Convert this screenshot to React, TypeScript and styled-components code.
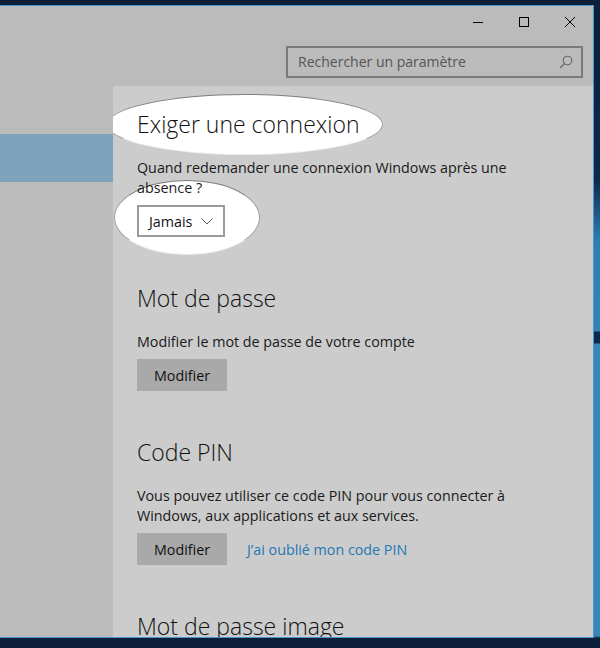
import React from "react";
import styled, { createGlobalStyle } from "styled-components";

const GlobalStyle = createGlobalStyle`
  html, body { margin: 0; padding: 0; background: #0b1f38; }
  body { font-family: "Open Sans", "Noto Sans", sans-serif; }
  * { box-sizing: border-box; }
`;

const Screen = styled.div`
  width: 600px;
  height: 648px;
  display: flex;
  overflow: hidden;
  background: #0b1f38;
`;

const WindowColumn = styled.div`
  width: 594px;
  padding-top: 5px;
  padding-bottom: 10px;
  display: flex;
`;

const DesktopStrip = styled.div`
  flex: 1;
  background: linear-gradient(
    to bottom,
    #0b1f38 0px,
    #0d2a4a 180px,
    #2f7db2 240px,
    #3583b6 331px,
    #0b2a4c 332px,
    #0b2a4c 343px,
    #3a86b8 344px,
    #3a86b8 636px,
    #0b1f38 638px
  );
`;

const Window = styled.div`
  flex: 1;
  display: flex;
  flex-direction: column;
  border: 1px solid #4a97cf;
  border-left: none;
  background: #bbbbbb;
  overflow: hidden;
`;

const TitleBar = styled.div`
  height: 32px;
  display: flex;
  justify-content: flex-end;
`;

const CaptionButton = styled.div`
  width: 46px;
  height: 32px;
  display: flex;
  align-items: center;
  justify-content: center;
  color: #000;
`;

const SearchRow = styled.div`
  height: 48px;
  display: flex;
  justify-content: flex-end;
  align-items: flex-start;
  padding: 8px 10px 0 0;
`;

const SearchBox = styled.div`
  width: 297px;
  height: 32px;
  border: 2px solid #7a7a7a;
  display: flex;
  align-items: center;
  justify-content: space-between;
  padding: 0 8px 1px 10px;
  font-size: 14px;
  color: #555;
`;

const Body = styled.div`
  flex: 1;
  display: flex;
  min-height: 0;
`;

const Nav = styled.div`
  width: 113px;
  padding-top: 48px;
  background: #bbbbbb;
`;

const NavItem = styled.div<{ $selected?: boolean }>`
  height: 48px;
  background: ${(p) => (p.$selected ? "#7fa3bb" : "transparent")};
`;

const Content = styled.div`
  flex: 1;
  background: #cccccc;
  padding: 22px 0 0 24px;
  overflow: hidden;
`;

const Section = styled.section`
  position: relative;
  width: 380px;
  margin-bottom: 45px;
`;

const Highlight = styled.div<{ $w: number; $h: number; $x: number; $y: number }>`
  position: absolute;
  left: ${(p) => p.$x}px;
  top: ${(p) => p.$y}px;
  width: ${(p) => p.$w}px;
  height: ${(p) => p.$h}px;
  border-radius: 50%;
  background: radial-gradient(ellipse at center, #ffffff 0%, #ffffff 82%, #f2f2f2 100%);
  border: 1.5px solid #7f7f7f;
  border-bottom-color: rgba(200, 200, 200, 0.3);
  border-left-color: #a0a0a0;
  border-right-color: #a0a0a0;
  z-index: 0;
`;

const Heading = styled.h2`
  position: relative;
  z-index: 1;
  margin: 0 0 18px 0;
  font-family: "Open Sans", "Noto Sans", sans-serif;
  font-weight: 300;
  font-size: 23px;
  line-height: 32px;
  color: #111;
`;

const Text = styled.p`
  position: relative;
  z-index: 1;
  margin: 0 0 7px 0;
  font-size: 14.3px;
  line-height: 20px;
  color: #1a1a1a;
  max-width: 372px;
`;

const Dropdown = styled.div`
  position: relative;
  z-index: 1;
  width: 88px;
  height: 32px;
  border: 2px solid #9b9b9b;
  background: #fff;
  display: flex;
  align-items: center;
  justify-content: space-between;
  padding: 0 10px 0 10px;
  font-size: 14.3px;
  color: #111;
`;

const ButtonRow = styled.div`
  display: flex;
  align-items: center;
  gap: 20px;
`;

const Button = styled.div`
  width: 90px;
  height: 32px;
  background: #a9a9a9;
  display: flex;
  align-items: center;
  justify-content: center;
  font-size: 14.3px;
  color: #111;
`;

const Link = styled.a`
  font-size: 14.3px;
  color: #1f78b5;
  text-decoration: none;
`;

const Minimize = () => (
  <svg width="10" height="10" viewBox="0 0 10 10">
    <line x1="0" y1="5.5" x2="10" y2="5.5" stroke="#000" strokeWidth="1" />
  </svg>
);
const Maximize = () => (
  <svg width="10" height="10" viewBox="0 0 10 10">
    <rect x="0.5" y="0.5" width="9" height="9" fill="none" stroke="#000" strokeWidth="1" />
  </svg>
);
const Close = () => (
  <svg width="10" height="10" viewBox="0 0 10 10">
    <path d="M0 0 L10 10 M10 0 L0 10" stroke="#000" strokeWidth="1" />
  </svg>
);
const SearchIcon = () => (
  <svg width="14" height="14" viewBox="0 0 14 14">
    <circle cx="8.5" cy="5.5" r="4.3" fill="none" stroke="#666" strokeWidth="1.1" />
    <line x1="5.4" y1="8.6" x2="1" y2="13" stroke="#666" strokeWidth="1.2" />
  </svg>
);
const Chevron = () => (
  <svg width="12" height="7" viewBox="0 0 12 7">
    <path d="M0.5 0.5 L6 6 L11.5 0.5" fill="none" stroke="#555" strokeWidth="1" />
  </svg>
);

export default function App() {
  return (
    <>
      <GlobalStyle />
      <Screen>
        <WindowColumn>
          <Window>
            <TitleBar>
              <CaptionButton><Minimize /></CaptionButton>
              <CaptionButton><Maximize /></CaptionButton>
              <CaptionButton><Close /></CaptionButton>
            </TitleBar>
            <SearchRow>
              <SearchBox>
                <span>Rechercher un paramètre</span>
                <SearchIcon />
              </SearchBox>
            </SearchRow>
            <Body>
              <Nav>
                <NavItem $selected />
              </Nav>
              <Content>
                <Section>
                  <Highlight $x={-30} $y={-14} $w={276} $h={61} />
                  <Heading>Exiger une connexion</Heading>
                  <Text>Quand redemander une connexion Windows après une absence ?</Text>
                  <Highlight $x={-23} $y={72} $w={146} $h={75} />
                  <Dropdown>
                    <span>Jamais</span>
                    <Chevron />
                  </Dropdown>
                </Section>
                <Section>
                  <Heading>Mot de passe</Heading>
                  <Text>Modifier le mot de passe de votre compte</Text>
                  <Button>Modifier</Button>
                </Section>
                <Section>
                  <Heading>Code PIN</Heading>
                  <Text>Vous pouvez utiliser ce code PIN pour vous connecter à Windows, aux applications et aux services.</Text>
                  <ButtonRow>
                    <Button>Modifier</Button>
                    <Link href="#">J’ai oublié mon code PIN</Link>
                  </ButtonRow>
                </Section>
                <Section>
                  <Heading>Mot de passe image</Heading>
                </Section>
              </Content>
            </Body>
          </Window>
        </WindowColumn>
        <DesktopStrip />
      </Screen>
    </>
  );
}
